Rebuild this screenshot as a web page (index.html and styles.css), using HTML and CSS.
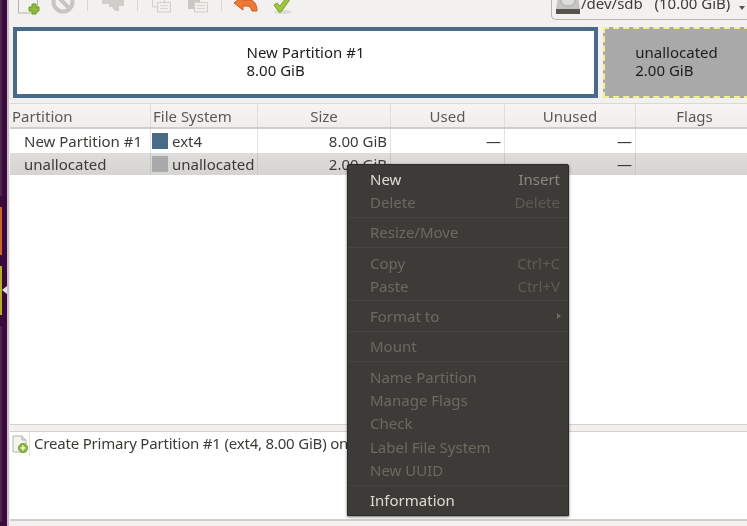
FILE: index.html
```html
<!DOCTYPE html>
<html lang="en">
<head>
<meta charset="utf-8">
<title>GParted</title>
<link rel="stylesheet" href="styles.css">
</head>
<body>
<div class="screen">
  <aside class="launcher">
    <div class="tile tile-dark"></div>
    <div class="tile tile-orange"></div>
    <div class="tile tile-yellow"></div>
    <div class="tile tile-dark"></div>
    <span class="launcher-arrow"></span>
  </aside>
  <main class="window">
    <div class="toolbar">
      <div class="tools">
        <svg class="tool tool-new" width="26" height="22" viewBox="0 0 26 22"><path d="M1.500-3h19v16h-19z" fill="#f2f2ef" stroke="#b5b5b0"/><path d="M15 4h4v3h3v4h-3v3h-4v-3h-3V7h3z" fill="#8dbb3a" stroke="#6f9a28"/></svg>
        <svg class="tool tool-del" width="25" height="22" viewBox="0 0 25 22"><circle cx="12" cy="2" r="9.500" fill="none" stroke="#c6c5c0" stroke-width="4"/><path d="M5-5L19 9" stroke="#c6c5c0" stroke-width="4"/></svg>
        <i class="sep"></i>
        <svg class="tool tool-move" width="26" height="22" viewBox="0 0 26 22"><path d="M1 0h11V-2h11v8h-5v5h-4l-3-4H8V4H1z" fill="#cfcec9"/></svg>
        <i class="sep sep-b"></i>
        <svg class="tool tool-copy" width="22" height="22" viewBox="0 0 22 22"><path d="M1.500-2h12v9h-12z" fill="#f0efec" stroke="#d0cfca"/><path d="M6.500 2.500h13v9.500h-13z" fill="#f0efec" stroke="#cfcec9"/><path d="M9 5.500h8M9 8.500h8" stroke="#d8d7d2"/></svg>
        <svg class="tool tool-paste" width="22" height="22" viewBox="0 0 22 22"><path d="M1-2h12v11H1z" fill="#c9c8c3"/><path d="M7.500 2.500h13v9.500h-13z" fill="#f0efec" stroke="#cfcec9"/><path d="M10 5.500h8M10 8.500h8" stroke="#d8d7d2"/></svg>
        <i class="sep sep-c"></i>
        <svg class="tool tool-undo" width="26" height="22" viewBox="0 0 26 22"><path d="M1 3L10-4v4h6c5 0 8 4 8 11h-5c-1-3-2-5-5-5h-4v4z" fill="#ea7a35" stroke="#d2581f"/></svg>
        <svg class="tool tool-apply" width="22" height="22" viewBox="0 0 22 22"><ellipse cx="11" cy="12" rx="9" ry="2" fill="#dcdbd6"/><path d="M2 5l3-2 3 3 6-8h5L9 12H7z" fill="#9cc63f" stroke="#7aa52c"/></svg>
      </div>
      <div class="device">
        <svg class="disk" width="26" height="20" viewBox="0 0 26 20"><path d="M3 0h20l2 12v4H1v-4z" fill="#c6c5c0"/><ellipse cx="13" cy="4" rx="7" ry="5" fill="#dededa" stroke="#aaa"/><path d="M1 12h24v5H1z" fill="#55544f"/></svg>
        <span class="device-name">/dev/sdb&nbsp;&nbsp;&nbsp;(10.00 GiB)</span>
        <span class="caret"></span>
      </div>
    </div>

    <section class="graph">
      <div class="part part-used">
        <div class="part-label">New Partition #1<br>8.00 GiB</div>
      </div>
      <div class="part part-free">
        <div class="part-label">unallocated<br>2.00 GiB</div>
      </div>
    </section>

    <section class="table">
      <div class="row head">
        <div class="cell">Partition</div>
        <div class="cell">File System</div>
        <div class="cell center">Size</div>
        <div class="cell center">Used</div>
        <div class="cell center">Unused</div>
        <div class="cell center">Flags</div>
      </div>
      <div class="row">
        <div class="cell indent">New Partition #1</div>
        <div class="cell fs"><i class="swatch swatch-used"></i>ext4</div>
        <div class="cell right">8.00 GiB</div>
        <div class="cell right">—</div>
        <div class="cell right">—</div>
        <div class="cell"></div>
      </div>
      <div class="row selected">
        <div class="cell indent">unallocated</div>
        <div class="cell fs"><i class="swatch swatch-free"></i>unallocated</div>
        <div class="cell right">2.00 GiB</div>
        <div class="cell right">—</div>
        <div class="cell right">—</div>
        <div class="cell"></div>
      </div>
    </section>

    <div class="sash"></div>

    <section class="pending">
      <div class="op">
        <div class="op-cell">
          <svg class="op-icon" width="16" height="19" viewBox="0 0 16 19"><path d="M1 1h9l4 4v12H1z" fill="#f3f3f0" stroke="#b4b4af"/><path d="M10 1v4h4" fill="#dcdcd8" stroke="#b4b4af"/><circle cx="11" cy="13" r="4.500" fill="#8dbb3a" stroke="#6f9a28"/><path d="M11 10.500v5M8.500 13h5" stroke="#f4f7e8" stroke-width="1.500"/></svg>
        </div>
        <span class="op-text">Create Primary Partition #1 (ext4, 8.00 GiB) on /dev/sdb</span>
      </div>
    </section>
    <div class="statusbar"></div>

    <nav class="menu">
      <div class="menu-item on"><span>New</span><span class="accel">Insert</span></div>
      <div class="menu-item"><span>Delete</span><span class="accel">Delete</span></div>
      <hr class="menu-sep">
      <div class="menu-item"><span>Resize/Move</span></div>
      <hr class="menu-sep">
      <div class="menu-item"><span>Copy</span><span class="accel">Ctrl+C</span></div>
      <div class="menu-item"><span>Paste</span><span class="accel">Ctrl+V</span></div>
      <hr class="menu-sep">
      <div class="menu-item"><span>Format to</span><i class="sub"></i></div>
      <hr class="menu-sep">
      <div class="menu-item"><span>Mount</span></div>
      <hr class="menu-sep">
      <div class="menu-item"><span>Name Partition</span></div>
      <div class="menu-item"><span>Manage Flags</span></div>
      <div class="menu-item"><span>Check</span></div>
      <div class="menu-item"><span>Label File System</span></div>
      <div class="menu-item"><span>New UUID</span></div>
      <hr class="menu-sep">
      <div class="menu-item on"><span>Information</span></div>
    </nav>
  </main>
</div>
</body>
</html>
```
FILE: styles.css
```css
* { box-sizing: border-box; }
html, body { margin: 0; height: 100%; overflow: hidden; }
body { font-family: "Noto Sans", "Open Sans", sans-serif; font-size: 15px; color: #3c3b37; }

.screen { display: flex; width: 747px; height: 526px; filter: blur(0.3px); }

.launcher {
  position: relative;
  flex: none;
  width: 9px;
  background: #3b0a3c;
  display: flex;
  flex-direction: column;
  gap: 11px;
  border-right: 2px solid #c9bdc6;
}
.tile { width: 2px; flex: none; }
.tile-dark { background: #4f2350; height: 196px; }
.tile-orange { background: #c9662a; height: 48px; }
.tile-yellow { background: #b6ad2c; height: 49px; }
.launcher-arrow {
  position: absolute;
  left: 2px;
  top: 286px;
  border: 4px solid transparent;
  border-left: 0;
  border-right: 5px solid #e6e1e4;
}

.window { position: relative; flex: 1; min-width: 0; background: #f2f1ef; display: flex; flex-direction: column; overflow: hidden; }

.toolbar { flex: none; height: 22px; display: flex; justify-content: space-between; overflow: hidden; }
.tools { display: flex; align-items: flex-start; padding-left: 8px; }
.tool { flex: none; display: block; }
.tool-del { margin-left: 8px; }
.sep { flex: none; width: 1px; height: 11px; background: #d8d7d3; margin-left: 11px; }
.tool-move { margin-left: 13px; }
.sep-b { margin-left: 10px; }
.tool-copy { margin-left: 13px; }
.tool-paste { margin-left: 14px; }
.sep-c { margin-left: 12px; }
.tool-undo { margin-left: 11px; }
.tool-apply { margin-left: 13px; }

.device {
  flex: none;
  width: 196px;
  height: 20px;
  border: 1px solid #b5b4af;
  border-top: 0;
  border-right: 0;
  border-radius: 0 0 0 5px;
  display: flex;
  align-items: center;
  padding-left: 3px;
  position: relative;
}
.disk { flex: none; margin-top: -6px; }
.device-name { margin-top: -14px; white-space: pre; }
.caret {
  position: absolute;
  right: 2px;
  top: 6px;
  border: 3px solid transparent;
  border-top: 4px solid #55544f;
  border-bottom: 0;
}

.graph { flex: none; display: flex; width: 745px; height: 71px; margin: 5px 0 5px 4px; gap: 5px; line-height: 18px; color: #1d1d1b; }
.part { flex: none; display: flex; align-items: center; justify-content: center; padding-bottom: 4px; }
.part-used { width: 585px; background: #fff; border: 4px solid #4a6b88; }
.part-free { width: 147px; background: #a9a9a9; border: 2px dashed #f4ef8d; }

.table { flex: 1; min-height: 0; width: 745px; background: #fff; border-top: 1px solid #d8d7d3; margin-left: 1px; }
.row { display: grid; grid-template-columns: 141px 107px 133px 114px 131px 118px; height: 24px; }
.cell { border-right: 1px solid #e3e2de; padding: 0 2px; line-height: 24px; white-space: nowrap; overflow: hidden; }
.head { height: 25px; background: linear-gradient(#f6f5f3, #efeeeb); border-bottom: 2px solid #cfcec9; color: #5a5955; }
.head .cell { line-height: 25px; border-right-color: #dfded9; }
.center { text-align: center; }
.right { text-align: right; padding-right: 3px; }
.indent { padding-left: 14px; }
.fs { display: flex; align-items: center; gap: 4px; padding-left: 1px; }
.swatch { width: 16px; height: 16px; flex: none; }
.swatch-used { background: #4a6b88; }
.swatch-free { background: #a9a9a9; }
.row.selected { background: linear-gradient(#dedddb, #d5d4d1); height: 22px; }
.row.selected .cell { border-right-color: #c8c7c3; line-height: 22px; }

.sash { flex: none; height: 8px; margin-left: 1px; border-top: 1px solid #d3d2ce; border-bottom: 1px solid #d3d2ce; background: #f2f1ef; }

.pending {
  flex: none;
  margin-left: 1px;
  height: 89px;
  background: #fff;
  border-bottom: 2px solid #cfcec9;
}
.op { display: flex; gap: 4px; padding-left: 2px; }
.op-cell { flex: none; height: 24px; padding-top: 3px; border-right: 1px solid #e3e2de; width: 18px; }
.op-icon { display: block; }
.op-text { line-height: 22px; white-space: nowrap; letter-spacing: -0.2px; }
.statusbar { flex: none; height: 5px; }

.menu {
  position: absolute;
  left: 338px;
  top: 164px;
  width: 222px;
  height: 352px;
  padding: 2px 0;
  background: #3c3b37;
  border: 1px solid #2b2a27;
  box-shadow: 0 1px 3px rgba(0, 0, 0, .55);
  color: #6c6a5f;
  border-radius: 2px 2px 0 0;
}
.menu-item { height: 23.300px; padding: 0 8px 0 22px; display: flex; justify-content: space-between; align-items: center; white-space: nowrap; }
.menu-item.on { color: #dfdbd2; }
.menu-item.on .accel { color: #8a887e; }
.accel { color: #5d5b52; }
.menu-sep { border: 0; height: 1px; margin: 3px 0; background: #45443f; }
.sub { border: 3px solid transparent; border-left: 4px solid #6c6a5f; border-right: 0; margin-right: -1px; }
```
